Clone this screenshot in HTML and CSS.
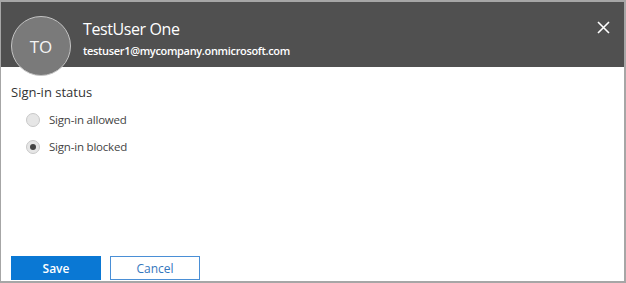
FILE: index.html
```html
<!DOCTYPE html>
<html lang="en">
<head>
    <meta charset="UTF-8">
    <title>Sign-in status</title>
    <link rel="stylesheet" href="styles.css">
</head>
<body>
    <div class="panel">
        <div class="header">
            <div class="avatar">TO</div>
            <div class="user-info">
                <h1>TestUser One</h1>
                <div class="email">testuser1@mycompany.onmicrosoft.com</div>
            </div>
            <button class="close" aria-label="Close">
                <svg width="13" height="13" viewBox="0 0 13 13">
                    <path d="M1 1L12 12M12 1L1 12" stroke="#fff" stroke-width="1.6" fill="none"/>
                </svg>
            </button>
        </div>

        <div class="content">
            <h2>Sign-in status</h2>
            <label class="radio">
                <input type="radio" name="status">
                <span class="dot"></span>
                Sign-in allowed
            </label>
            <label class="radio">
                <input type="radio" name="status" checked>
                <span class="dot"></span>
                Sign-in blocked
            </label>
        </div>

        <div class="footer">
            <button class="btn primary">Save</button>
            <button class="btn">Cancel</button>
        </div>
    </div>
</body>
</html>
```

FILE: styles.css
```css
* {
    margin: 0;
    padding: 0;
    box-sizing: border-box;
}

body {
    font-family: 'Open Sans', sans-serif;
    color: #333;
    background: #fff;
}

.panel {
    width: 626px;
    height: 283px;
    border: 1px solid #a6a6a6;
    border-top-width: 2px;
    border-right-width: 2px;
    border-bottom-width: 2px;
    display: flex;
    flex-direction: column;
}

.header {
    position: relative;
    height: 65px;
    background: #505050;
    color: #fff;
    display: flex;
    align-items: flex-start;
    padding: 14px 0 0 10px;
    gap: 12px;
}

.avatar {
    width: 60px;
    height: 60px;
    flex-shrink: 0;
    border-radius: 50%;
    background: #7a7a7a;
    border: 1px solid #c4c4c4;
    display: flex;
    align-items: center;
    justify-content: center;
    font-size: 17px;
    color: #f4f4f4;
    position: relative;
    z-index: 1;
}

.user-info h1 {
    font-size: 16px;
    font-weight: 400;
    letter-spacing: -0.4px;
    line-height: 22px;
    margin-top: 2px;
}

.email {
    font-size: 11px;
    font-weight: 600;
    letter-spacing: -0.33px;
    margin-top: 3px;
}

.close {
    position: absolute;
    top: 19px;
    right: 14px;
    background: none;
    border: none;
    width: 13px;
    height: 13px;
    display: flex;
}

.content {
    padding: 17px 10px 0;
}

.content h2 {
    font-size: 13px;
    font-weight: 400;
    color: #333;
    line-height: 17px;
    margin-bottom: 5px;
}

.radio {
    display: flex;
    align-items: center;
    gap: 9px;
    padding-left: 15px;
    height: 27px;
    font-size: 11.5px;
    letter-spacing: -0.2px;
    color: #444;
}

.radio input {
    display: none;
}

.dot {
    width: 14px;
    height: 14px;
    border-radius: 50%;
    border: 1px solid #c8c8c8;
    background: #e6e6e6;
    display: flex;
    align-items: center;
    justify-content: center;
}

.radio input:checked + .dot::after {
    content: '';
    width: 6px;
    height: 6px;
    border-radius: 50%;
    background: #444;
}

.footer {
    margin-top: auto;
    padding: 0 0 1px 10px;
    display: flex;
    gap: 9px;
}

.btn {
    width: 90px;
    height: 24px;
    font-family: inherit;
    font-size: 12px;
    background: #fff;
    color: #3477bd;
    border: 1px solid #4a8fd6;
}

.btn.primary {
    background: #0a78d4;
    color: #fff;
    font-weight: 600;
    border-color: #0a78d4;
}
```
